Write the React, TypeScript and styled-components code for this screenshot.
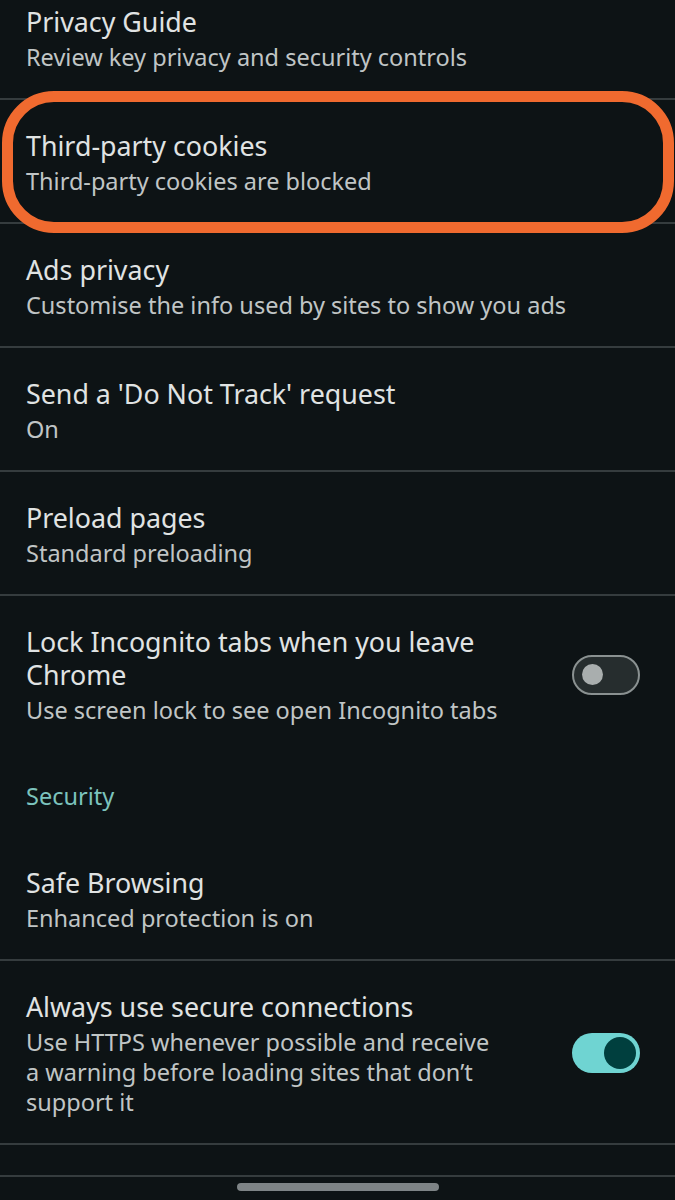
import React from "react";
import styled, { createGlobalStyle } from "styled-components";

const GlobalStyle = createGlobalStyle`
  html, body {
    margin: 0;
    padding: 0;
    background: #0d1315;
  }
  body {
    font-family: "Noto Sans", "Open Sans", sans-serif;
    -webkit-font-smoothing: antialiased;
  }
`;

const Viewport = styled.div`
  width: 675px;
  height: 1200px;
  overflow: hidden;
  background: #0d1315;
  display: flex;
  flex-direction: column;
`;

const List = styled.div`
  margin-top: -24.5px;
  display: flex;
  flex-direction: column;
`;

const Row = styled.div<{ $divider?: boolean }>`
  position: relative;
  display: flex;
  align-items: center;
  gap: 72px;
  padding: 29px 35px 26px 26px;
  border-bottom: ${(p) => (p.$divider ? "2px solid #353c3e" : "none")};
`;

const EmptyRow = styled.div`
  height: 30px;
  border-bottom: 2px solid #353c3e;
`;

const TextCol = styled.div`
  flex: 1;
  min-width: 0;
  display: flex;
  flex-direction: column;
  gap: 4px;
`;

const Title = styled.div`
  font-size: 26.8px;
  line-height: 33px;
  color: #e0e3e3;
`;

const Subtitle = styled.div`
  font-size: 23.5px;
  line-height: 30px;
  color: #c0c5c5;
`;

const SectionHeader = styled.div`
  padding: 30px 26px 26px 26px;
  font-size: 23.5px;
  line-height: 30px;
  color: #7cc3bd;
`;

const Track = styled.div<{ $on: boolean }>`
  flex: none;
  box-sizing: border-box;
  width: 68px;
  height: 40px;
  border-radius: 20px;
  display: flex;
  align-items: center;
  justify-content: ${(p) => (p.$on ? "flex-end" : "flex-start")};
  padding: ${(p) => (p.$on ? "0 4px 0 0" : "0 0 0 7.5px")};
  background: ${(p) => (p.$on ? "#6fd4d2" : "#262d2e")};
  border: ${(p) => (p.$on ? "none" : "2px solid #8a9191")};
`;

const Thumb = styled.div<{ $on: boolean }>`
  width: ${(p) => (p.$on ? "32px" : "21px")};
  height: ${(p) => (p.$on ? "32px" : "21px")};
  border-radius: 50%;
  background: ${(p) => (p.$on ? "#003f3e" : "#a9aeae")};
`;

const Highlight = styled.div`
  position: absolute;
  top: -9px;
  bottom: -11px;
  left: 2px;
  right: 1px;
  border: 11px solid #f06a2f;
  border-radius: 52px;
  pointer-events: none;
  z-index: 2;
`;

const NavBar = styled.div`
  display: flex;
  justify-content: center;
  padding-top: 6px;
`;

const HomePill = styled.div`
  width: 202px;
  height: 8px;
  border-radius: 4px;
  background: #7e8486;
`;

const Toggle = ({ on }: { on: boolean }) => (
  <Track $on={on}>
    <Thumb $on={on} />
  </Track>
);

type Item = {
  title: string;
  subtitle: string;
  highlight?: boolean;
};

const privacyItems: Item[] = [
  { title: "Privacy Guide", subtitle: "Review key privacy and security controls" },
  { title: "Third-party cookies", subtitle: "Third-party cookies are blocked", highlight: true },
  { title: "Ads privacy", subtitle: "Customise the info used by sites to show you ads" },
  { title: "Send a 'Do Not Track' request", subtitle: "On" },
  { title: "Preload pages", subtitle: "Standard preloading" },
];

export default function App() {
  return (
    <>
      <GlobalStyle />
      <Viewport>
        <List>
          {privacyItems.map((item) => (
            <Row key={item.title} $divider>
              <TextCol>
                <Title>{item.title}</Title>
                <Subtitle>{item.subtitle}</Subtitle>
              </TextCol>
              {item.highlight && <Highlight />}
            </Row>
          ))}
          <Row>
            <TextCol>
              <Title>Lock Incognito tabs when you leave Chrome</Title>
              <Subtitle>Use screen lock to see open Incognito tabs</Subtitle>
            </TextCol>
            <Toggle on={false} />
          </Row>
          <SectionHeader>Security</SectionHeader>
          <Row $divider>
            <TextCol>
              <Title>Safe Browsing</Title>
              <Subtitle>Enhanced protection is on</Subtitle>
            </TextCol>
          </Row>
          <Row $divider>
            <TextCol>
              <Title>Always use secure connections</Title>
              <Subtitle>
                Use HTTPS whenever possible and receive a warning before loading sites that don’t support it
              </Subtitle>
            </TextCol>
            <Toggle on={true} />
          </Row>
          <EmptyRow />
        </List>
        <NavBar>
          <HomePill />
        </NavBar>
      </Viewport>
    </>
  );
}
